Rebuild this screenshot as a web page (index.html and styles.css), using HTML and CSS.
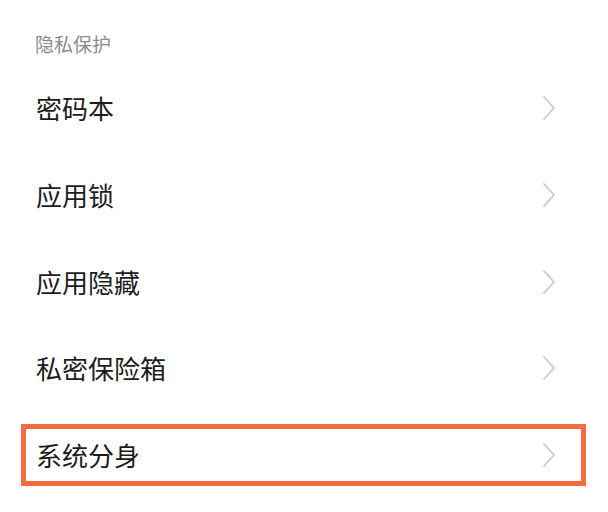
FILE: index.html
```html
<!DOCTYPE html>
<html lang="zh">
<head>
<meta charset="utf-8">
<link rel="stylesheet" href="styles.css">
</head>
<body>
<div class="page">
  <div class="section-title">隐私保护</div>
  <div class="list">
    <div class="row"><span class="label">密码本</span><svg class="chev" viewBox="0 0 14 26"><path d="M2 2 L12 13 L2 24"/></svg></div>
    <div class="row"><span class="label">应用锁</span><svg class="chev" viewBox="0 0 14 26"><path d="M2 2 L12 13 L2 24"/></svg></div>
    <div class="row"><span class="label">应用隐藏</span><svg class="chev" viewBox="0 0 14 26"><path d="M2 2 L12 13 L2 24"/></svg></div>
    <div class="row"><span class="label">私密保险箱</span><svg class="chev" viewBox="0 0 14 26"><path d="M2 2 L12 13 L2 24"/></svg></div>
    <div class="row highlighted"><span class="label">系统分身</span><svg class="chev" viewBox="0 0 14 26"><path d="M2 2 L12 13 L2 24"/></svg></div>
  </div>
</div>
</body>
</html>
```
FILE: styles.css
```css
html, body {
  margin: 0;
  padding: 0;
  background: #ffffff;
}
.page {
  width: 608px;
  height: 512px;
  overflow: hidden;
  font-family: "Noto Sans CJK SC", "Noto Sans", sans-serif;
}
.section-title {
  padding: 30px 0 0 35px;
  height: 35px;
  font-size: 19px;
  line-height: 28px;
  color: #8c8c8c;
}
.list {
  display: flex;
  flex-direction: column;
}
.row {
  position: relative;
  height: 86.7px;
  display: flex;
  align-items: center;
  justify-content: space-between;
  padding: 0 52px 0 36px;
}
.label {
  font-size: 26px;
  line-height: 36px;
  color: #1c1c1c;
}
.chev {
  width: 14px;
  height: 26px;
  fill: none;
  stroke: #c9c9c9;
  stroke-width: 1.8;
  stroke-linecap: round;
  stroke-linejoin: round;
}
.highlighted::after {
  content: "";
  position: absolute;
  left: 21px;
  right: 22px;
  top: 12px;
  height: 52px;
  border: 5px solid #f36c40;
}
```
